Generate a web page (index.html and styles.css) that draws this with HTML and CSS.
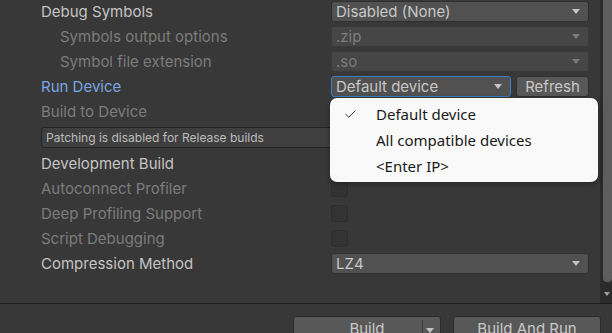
FILE: index.html
```html
<!DOCTYPE html>
<html lang="en">
<head>
    <meta charset="UTF-8">
    <meta name="viewport" content="width=device-width, initial-scale=1.0">
    <link rel="stylesheet" href="styles.css">
</head>
<body>

<div class="window">
    <!-- Settings list -->
    <div class="inspector">
        <div class="settings">
            <div class="row">
                <span class="label">Debug Symbols</span>
                <div class="dropdown"><span>Disabled (None)</span><i class="tri"></i></div>
            </div>
            <div class="row">
                <span class="label indent disabled">Symbols output options</span>
                <div class="dropdown off"><span>.zip</span><i class="tri"></i></div>
            </div>
            <div class="row">
                <span class="label indent disabled">Symbol file extension</span>
                <div class="dropdown off"><span>.so</span><i class="tri"></i></div>
            </div>
            <div class="row">
                <span class="label focus">Run Device</span>
                <div class="control-pair">
                    <div class="dropdown active"><span>Default device</span><i class="tri"></i></div>
                    <button class="btn refresh">Refresh</button>
                </div>
            </div>
            <div class="row">
                <span class="label disabled">Build to Device</span>
            </div>
            <div class="helpbox">Patching is disabled for Release builds</div>
            <div class="row">
                <span class="label">Development Build</span>
                <div class="checkbox"></div>
            </div>
            <div class="row">
                <span class="label disabled">Autoconnect Profiler</span>
                <div class="checkbox"></div>
            </div>
            <div class="row">
                <span class="label disabled">Deep Profiling Support</span>
                <div class="checkbox"></div>
            </div>
            <div class="row">
                <span class="label disabled">Script Debugging</span>
                <div class="checkbox"></div>
            </div>
            <div class="row">
                <span class="label">Compression Method</span>
                <div class="dropdown"><span>LZ4</span><i class="tri"></i></div>
            </div>
        </div>
        <div class="scrollbar">
            <div class="thumb"></div>
            <i class="tri small"></i>
        </div>
    </div>

    <!-- Bottom buttons -->
    <div class="footer">
        <div class="btn build">
            <span class="build-label">Build</span>
            <span class="build-arrow"><i class="tri"></i></span>
        </div>
        <div class="btn build-run">Build And Run</div>
    </div>

    <!-- Run Device menu -->
    <div class="popup">
        <div class="item">
            <span class="check">
                <svg width="11" height="8" viewBox="0 0 11 8"><path d="M0.5 4 L3.8 7.2 L10.5 0.6" fill="none" stroke="#3a3a3a" stroke-width="1"/></svg>
            </span>
            <span>Default device</span>
        </div>
        <div class="item"><span class="check"></span><span>All compatible devices</span></div>
        <div class="item"><span class="check"></span><span>&lt;Enter IP&gt;</span></div>
    </div>
</div>

</body>
</html>
```

FILE: styles.css
```css
body {
  margin: 0;
  padding: 0;
  background-color: #383838;
  font-family: Inter, "Noto Sans", sans-serif;
  font-size: 15px;
  color: #c4c4c4;
}
.window {
  position: relative;
  width: 612px;
  height: 333px;
  overflow: hidden;
}
.inspector {
  display: flex;
  height: 303px;
  border-bottom: 1px solid #1e1e1e;
}
.settings {
  flex: 1;
  padding: 0 11px 0 41px;
  margin-top: -1px;
}
.row {
  display: grid;
  grid-template-columns: 290px 1fr;
  align-items: center;
  height: 25px;
}
.label {
  white-space: nowrap;
}
.label.indent {
  padding-left: 19px;
}
.label.disabled {
  color: #7c7c7c;
}
.label.focus {
  color: #79a6e4;
}
.dropdown {
  display: flex;
  align-items: center;
  justify-content: space-between;
  height: 21px;
  box-sizing: border-box;
  padding: 0 5px 0 4px;
  background-color: #515151;
  border: 1px solid #303030;
  border-radius: 3px;
  color: #c8c8c8;
}
.dropdown.off {
  background-color: #464646;
  border-color: #3a3a3a;
  color: #7c7c7c;
}
.dropdown.active {
  width: 180px;
  border-color: #3d7ec4;
}
.tri {
  display: inline-block;
  width: 0;
  height: 0;
  margin-right: 3px;
  border-left: 4px solid transparent;
  border-right: 4px solid transparent;
  border-top: 5px solid #c4c4c4;
}
.dropdown.off .tri {
  border-top-color: #7c7c7c;
}
.control-pair {
  display: flex;
  gap: 5px;
}
.btn {
  height: 21px;
  box-sizing: border-box;
  background-color: #585858;
  border: 1px solid #303030;
  border-radius: 3px;
  color: #c8c8c8;
  font-family: Inter, "Noto Sans", sans-serif;
  font-size: 15px;
  padding: 0;
}
.btn.refresh {
  width: 73px;
}
.helpbox {
  height: 21px;
  box-sizing: border-box;
  margin: 3px 0;
  padding: 0 4px;
  display: flex;
  align-items: center;
  font-size: 12px;
  color: #bdbdbd;
  background-color: #3f3f3f;
  border: 1px solid #232323;
  border-radius: 3px;
}
.checkbox {
  width: 17px;
  height: 17px;
  box-sizing: border-box;
  background-color: #333333;
  border: 1px solid #2d2d2d;
  border-radius: 3px;
}
.scrollbar {
  position: relative;
  width: 12px;
  background-color: #2b2b2b;
}
.thumb {
  margin-left: 3px;
  height: 282px;
  background-color: #5d5d5d;
  border-radius: 0 0 4px 4px;
}
.tri.small {
  position: absolute;
  left: 4px;
  top: 292px;
  border-left-width: 3.5px;
  border-right-width: 3.5px;
  border-top: 4px solid #a0a0a0;
}
.footer {
  display: flex;
  gap: 12px;
  padding: 12px 0 0 293px;
}
.btn.build,
.btn.build-run {
  height: 28px;
  display: flex;
  align-items: flex-start;
  padding-top: 2px;
  border-color: #2a2a2a;
}
.btn.build {
  width: 148px;
}
.build-label {
  flex: 1;
  text-align: center;
  padding-left: 18px;
}
.build-arrow {
  width: 18px;
  border-left: 1px solid #3a3a3a;
  height: 20px;
  margin-top: 1px;
  display: flex;
  justify-content: center;
  padding-top: 8px;
  box-sizing: border-box;
}
.btn.build-run {
  width: 148px;
  justify-content: center;
}
.popup {
  position: absolute;
  left: 330px;
  top: 98px;
  width: 268px;
  height: 84px;
  box-sizing: border-box;
  padding-top: 3px;
  background-color: #f9f9f9;
  border-radius: 7px;
  box-shadow: 0 2px 6px rgba(0, 0, 0, 0.35);
  font-family: "Noto Sans", sans-serif;
  color: #1a1a1a;
}
.item {
  display: flex;
  align-items: center;
  height: 26px;
}
.check {
  display: flex;
  width: 46px;
  padding-left: 15px;
  box-sizing: border-box;
}
```
